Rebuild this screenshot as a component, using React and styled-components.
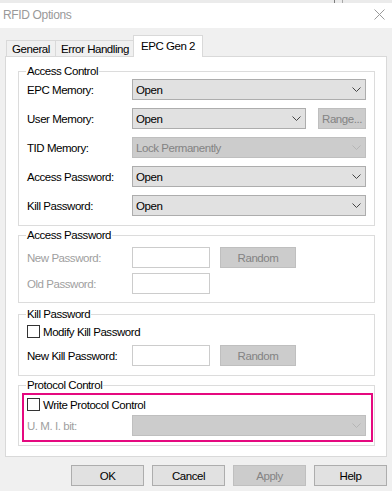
import React from "react";
import styled, { createGlobalStyle, css } from "styled-components";

const Global = createGlobalStyle`
  html, body { margin: 0; padding: 0; }
  body {
    width: 392px;
    height: 491px;
    overflow: hidden;
    background: #f0f0f0;
    font-family: "Liberation Sans", Arial, sans-serif;
    font-size: 11.5px;
    letter-spacing: -0.45px;
    color: #000;
  }
  * { box-sizing: border-box; }
`;

const Window = styled.div`
  width: 392px;
  height: 491px;
  display: flex;
  flex-direction: column;
  background: #f0f0f0;
`;

const TopStrip = styled.div`
  height: 3px;
  background: #ebebeb;
  display: flex;
`;

const StripGap = styled.div`
  width: ${(p) => p.$w}px;
`;

const StripLine = styled.div`
  width: 1px;
  background: ${(p) => p.$c};
`;

const TitleBar = styled.div`
  height: 25px;
  background: #fff;
  display: flex;
  align-items: center;
  justify-content: space-between;
  padding: 0 7px 0 3px;
`;

const Title = styled.div`
  font-size: 12px;
  letter-spacing: -0.35px;
  color: #999;
  margin-top: -2px;
`;

const CloseIcon = styled.svg`
  width: 11px;
  height: 11px;
  margin-top: -3px;
`;

const Body = styled.div`
  flex: 1;
  display: flex;
  flex-direction: column;
  padding: 7px 5px 0 5px;
`;

const TabStrip = styled.div`
  height: 21px;
  display: flex;
  align-items: flex-end;
  padding-left: 1px;
`;

const Tab = styled.div`
  width: ${(p) => p.$w}px;
  height: 16px;
  margin-left: ${(p) => p.$ml || 0}px;
  border: 1px solid #d9d9d9;
  border-bottom: none;
  background: #f0f0f0;
  display: flex;
  align-items: center;
  justify-content: center;
  padding-top: 1px;
  ${(p) =>
    p.$selected &&
    css`
      height: 22px;
      margin-bottom: -1px;
      background: #fff;
      position: relative;
      z-index: 1;
      padding-top: 0;
      padding-bottom: 2px;
    `}
`;

const Panel = styled.div`
  width: 382px;
  height: 401px;
  border: 1px solid #d9d9d9;
  background: #fff;
  padding: 14px 11px 0 12px;
  display: flex;
  flex-direction: column;
`;

const Group = styled.div`
  position: relative;
  height: ${(p) => p.$h}px;
  margin-top: ${(p) => p.$mt || 0}px;
  border: 1px solid #dcdcdc;
  padding: ${(p) => p.$pt}px 8px 0 8px;
  display: flex;
  flex-direction: column;
  gap: ${(p) => p.$gap || 0}px;
`;

const Caption = styled.div`
  position: absolute;
  top: -7px;
  left: 7px;
  padding: 0 1px;
  line-height: 13px;
  background: #fff;
`;

const Row = styled.div`
  display: flex;
  align-items: center;
  height: 21px;
`;

const Label = styled.div`
  width: 105px;
  flex: none;
  color: ${(p) => (p.$disabled ? "#a0a0a0" : "#000")};
`;

const Combo = styled.div`
  flex: 1;
  height: 21px;
  border: 1px solid ${(p) => (p.$disabled ? "#bfbfbf" : "#adadad")};
  background: ${(p) => (p.$disabled ? "#cccccc" : "#e1e1e1")};
  color: ${(p) => (p.$disabled ? "#838383" : "#000")};
  display: flex;
  align-items: center;
  justify-content: space-between;
  padding: 0 4px 0 3px;
`;

const Chevron = styled.svg`
  width: 9px;
  height: 5px;
  flex: none;
`;

const Button = styled.div`
  width: ${(p) => p.$w}px;
  height: 21px;
  flex: none;
  margin-left: ${(p) => p.$ml || 0}px;
  border: 1px solid ${(p) => (p.$disabled ? "#bfbfbf" : "#adadad")};
  background: ${(p) => (p.$disabled ? "#cccccc" : "#e1e1e1")};
  color: ${(p) => (p.$disabled ? "#838383" : "#000")};
  display: flex;
  align-items: center;
  justify-content: center;
`;

const TextBox = styled.div`
  width: 78px;
  height: 21px;
  flex: none;
  border: 1px solid #cccccc;
  background: #fff;
`;

const CheckRow = styled.div`
  display: flex;
  align-items: center;
  height: 17px;
  gap: 3px;
`;

const CheckBox = styled.div`
  width: 13px;
  height: 13px;
  border: 1px solid #333;
  background: #fff;
  flex: none;
`;

const Highlight = styled.div`
  margin: 7px 1px 0 3px;
  border: 2px solid #e5097f;
  padding: 1px 5px 4px 3px;
  display: flex;
  flex-direction: column;
  gap: 2px;
`;

const ProtoGroup = styled(Group)`
  padding: 0;
`;

const ButtonRow = styled.div`
  display: flex;
  justify-content: flex-end;
  gap: 8px;
  margin-top: 8px;
`;

const Arrow = ({ disabled }) => (
  <Chevron viewBox="0 0 9 5">
    <polyline
      points="0.5,0.5 4.5,4.5 8.5,0.5"
      fill="none"
      stroke={disabled ? "#b5b5b5" : "#444"}
      strokeWidth="1"
    />
  </Chevron>
);

const Select = ({ value, disabled }) => (
  <Combo $disabled={disabled}>
    <span>{value}</span>
    <Arrow disabled={disabled} />
  </Combo>
);

export default function App() {
  return (
    <>
      <Global />
      <Window>
        <TopStrip>
          <StripGap $w={334} />
          <StripLine $c="#7d7d7d" />
          <StripGap $w={7} />
          <StripLine $c="#a8a8a8" />
        </TopStrip>
        <TitleBar>
          <Title>RFID Options</Title>
          <CloseIcon viewBox="0 0 11 11">
            <line x1="0.5" y1="0.5" x2="10.5" y2="10.5" stroke="#9a9a9a" strokeWidth="1" />
            <line x1="10.5" y1="0.5" x2="0.5" y2="10.5" stroke="#9a9a9a" strokeWidth="1" />
          </CloseIcon>
        </TitleBar>
        <Body>
          <TabStrip>
            <Tab $w={50}>General</Tab>
            <Tab $w={80} $ml={-1}>Error Handling</Tab>
            <Tab $w={70} $ml={-2} $selected>
              EPC Gen 2
            </Tab>
          </TabStrip>
          <Panel>
            <Group $h={155} $pt={7} $gap={8}>
              <Caption>Access Control</Caption>
              <Row>
                <Label>EPC Memory:</Label>
                <Select value="Open" />
              </Row>
              <Row>
                <Label>User Memory:</Label>
                <Select value="Open" />
                <Button $w={48} $ml={12} $disabled>
                  Range...
                </Button>
              </Row>
              <Row>
                <Label>TID Memory:</Label>
                <Select value="Lock Permanently" disabled />
              </Row>
              <Row>
                <Label>Access Password:</Label>
                <Select value="Open" />
              </Row>
              <Row>
                <Label>Kill Password:</Label>
                <Select value="Open" />
              </Row>
            </Group>

            <Group $h={68} $mt={9} $pt={11} $gap={5}>
              <Caption>Access Password</Caption>
              <Row>
                <Label $disabled>New Password:</Label>
                <TextBox />
                <Button $w={76} $ml={10} $disabled>
                  Random
                </Button>
              </Row>
              <Row>
                <Label $disabled>Old Password:</Label>
                <TextBox />
              </Row>
            </Group>

            <Group $h={62} $mt={11} $pt={8} $gap={5}>
              <Caption>Kill Password</Caption>
              <CheckRow>
                <CheckBox />
                <span>Modify Kill Password</span>
              </CheckRow>
              <Row>
                <Label>New Kill Password:</Label>
                <TextBox />
                <Button $w={76} $ml={10} $disabled>
                  Random
                </Button>
              </Row>
            </Group>

            <ProtoGroup $h={61} $mt={9}>
              <Caption>Protocol Control</Caption>
              <Highlight>
                <CheckRow>
                  <CheckBox />
                  <span>Write Protocol Control</span>
                </CheckRow>
                <Row>
                  <Label $disabled>U. M. I. bit:</Label>
                  <Select value="" disabled />
                </Row>
              </Highlight>
            </ProtoGroup>
          </Panel>
          <ButtonRow>
            <Button $w={73}>OK</Button>
            <Button $w={73}>Cancel</Button>
            <Button $w={73} $disabled>
              Apply
            </Button>
            <Button $w={73}>Help</Button>
          </ButtonRow>
        </Body>
      </Window>
    </>
  );
}
